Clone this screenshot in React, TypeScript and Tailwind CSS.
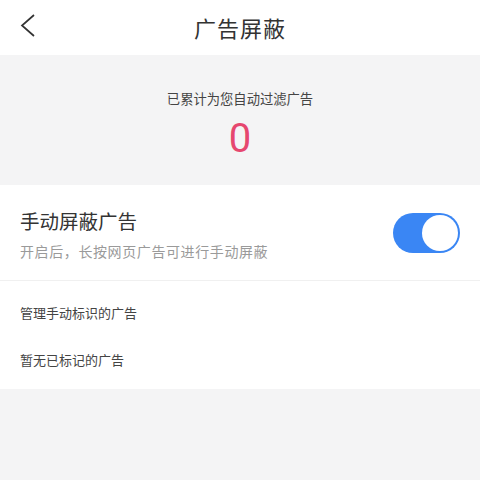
import { useState } from "react";

const font = { fontFamily: '"Noto Sans CJK SC", Roboto, "Noto Sans", sans-serif' };

export default function App() {
  const [on, setOn] = useState(true);

  return (
    <div className="flex h-[480px] w-[480px] flex-col bg-[#f4f4f5]" style={font}>
      {/* 顶栏 */}
      <header className="relative flex h-[55px] items-center justify-center bg-white">
        <button className="absolute left-[19px] top-[14px]">
          <svg width="18" height="24" viewBox="0 0 18 24" fill="none">
            <path d="M15 1L3 11.5L15 22" stroke="#333" strokeWidth="1.7" />
          </svg>
        </button>
        <h1 className="text-[22px] font-normal tracking-[1px] text-[#333]">广告屏蔽</h1>
      </header>

      {/* 统计 */}
      <section className="flex h-[130px] flex-col items-center pt-[34px]">
        <p className="text-[13.3px] leading-[20px] text-[#444]">已累计为您自动过滤广告</p>
        <p className="mt-[6px] text-[40px] leading-[48px] text-[#e6476f]" style={{ fontFamily: "Roboto, sans-serif" }}>
          0
        </p>
      </section>

      {/* 设置 */}
      <section className="bg-white">
        <div className="flex h-[96px] items-center justify-between border-b border-[#f0f0f0] px-[20px]">
          <div className="flex flex-col pt-[4px]">
            <span className="text-[19.5px] leading-[26px] text-[#333]">手动屏蔽广告</span>
            <span className="mt-[7px] text-[14px] leading-[20px] tracking-[0.6px] text-[#9a9a9a]">
              开启后，长按网页广告可进行手动屏蔽
            </span>
          </div>
          <button
            onClick={() => setOn((v) => !v)}
            className={`flex h-[40px] w-[67px] items-center rounded-full p-[2px] ${
              on ? "justify-end bg-[#3a86f4]" : "justify-start bg-[#ddd]"
            }`}
          >
            <span className="h-[36px] w-[36px] rounded-full bg-white" />
          </button>
        </div>
        <div className="flex h-[108px] flex-col justify-center gap-[27px] pl-[20px] pt-[2px] text-[13px] leading-[20px] text-[#444]">
          <span>管理手动标识的广告</span>
          <span>暂无已标记的广告</span>
        </div>
      </section>
    </div>
  );
}
